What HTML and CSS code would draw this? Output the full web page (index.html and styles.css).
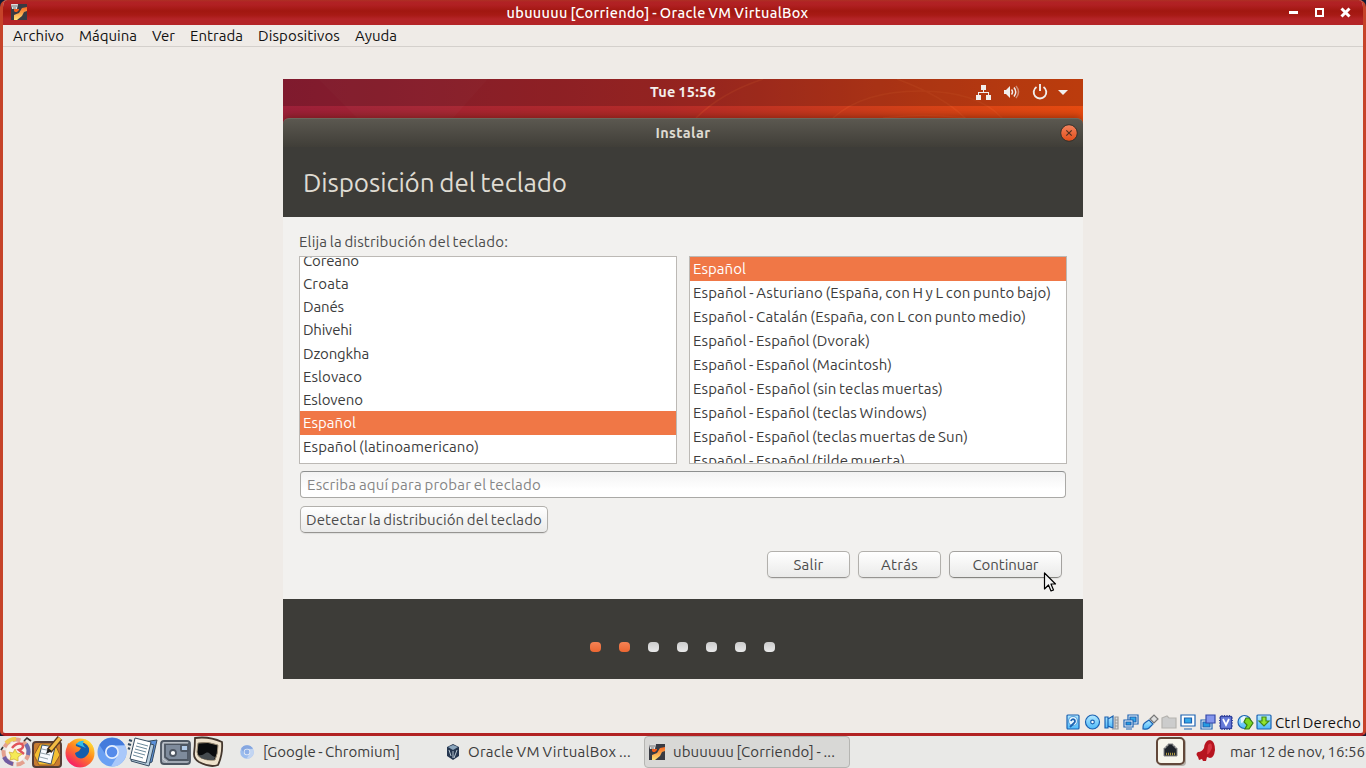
FILE: index.html
```html
<!DOCTYPE html>
<html lang="es">
<head>
<meta charset="utf-8">
<title>ubuuuuu [Corriendo] - Oracle VM VirtualBox</title>
<link rel="stylesheet" href="styles.css">
</head>
<body>
<svg class="defs" width="0" height="0" aria-hidden="true">
  <defs>
    <linearGradient id="blue" x2="0" y2="1"><stop stop-color="#b5e9ff"/><stop offset="1" stop-color="#4db9fa"/></linearGradient>
    <linearGradient id="orange" x2="0" y2="1"><stop stop-color="#f66820"/><stop offset="1" stop-color="#ffe477"/></linearGradient>
    <linearGradient id="fox" x1=".9" y1="0" x2=".2" y2="1"><stop stop-color="#fff13b"/><stop offset=".45" stop-color="#ff8a1c"/><stop offset="1" stop-color="#f5156c"/></linearGradient>
    <symbol id="vm" viewBox="0 0 16 16"><path fill="#393b43" d="M0 0h16v16H0z"/><path fill="url(#orange)" d="M11 4l5-1v4l-3 1-2 4-5 4H3v-5l5-2z"/><path fill="#f05a18" d="M3 5h5v1l-2 2H4L3 7z"/><path fill="#ddd" d="M0 0h7l-1 5H1z"/><path stroke="#777" d="M1 2h5M2 4h3"/></symbol>
    <symbol id="chromium" viewBox="0 0 30 30"><circle cx="15" cy="15" r="14.500" fill="#6aa0f3"/><path fill="#447bdc" d="M2.500 8A14.500 14.500 0 0 1 27.700 8H15a7 7 0 0 0-6 10z"/><path fill="#a9c8fa" d="M28 8.500A14.500 14.500 0 0 1 14 29.500L21 18a7 7 0 0 0-3-9z"/><circle cx="15" cy="15" r="7" fill="#e5eefc"/><circle cx="15" cy="15" r="5.300" fill="#558bea"/></symbol>
  </defs>
</svg>
<div class="desktop">
  <div class="window">
    <header class="titlebar">
      <svg class="title-icon" width="16" height="16"><use href="#vm"/></svg>
      <h1 class="win-title"><span data-w="302">ubuuuuu [Corriendo] - Oracle VM VirtualBox</span></h1>
      <svg class="win-buttons" width="64" height="12" viewBox="0 0 64 12"><path fill="#fff" d="M0 5h9v3H0z"/><path fill="none" stroke="#fff" stroke-width="2" d="M27 3h7v7h-7z"/><path stroke="#fff" stroke-width="3" d="M52.500 2.500l8 8m0-8l-8 8"/></svg>
    </header>
    <nav class="menubar">
      <span data-w="51">Archivo</span><span data-w="58">Máquina</span><span data-w="23">Ver</span><span data-w="53">Entrada</span><span data-w="82">Dispositivos</span><span data-w="42">Ayuda</span>
    </nav>
    <main class="workspace">
      <section class="guest">
        <div class="panel">
          <svg class="wallpaper" width="800" height="39" viewBox="0 0 800 39"><g fill="none" stroke="#f36a30" stroke-opacity=".22" stroke-width="1.500"><path d="M413 39Q438 14 480 0M550 39Q580 12 637 12T719 39M614 0Q660 17 682 39"/><path d="M600 39Q640 34 683 39"/></g><path fill="#fff" fill-opacity=".02" d="M35 0h170l-35 39H74z"/></svg>
          <div class="topbar">
            <span class="clock" data-w="66">Tue 15:56</span>
            <svg class="indicators" width="94" height="18" viewBox="0 0 94 18" fill="#f1efed"><path d="M5 2h5v5H8v2h5v3h2v5h-5v-5h2v-2H3v2h2v5H0v-5h2V9h5V7H5z"/><path d="M28 7h2l4-4v12l-4-4h-2z"/><path fill="none" stroke="#f1efed" stroke-width="1.500" d="M35.500 6.500q2 2.500 0 5M38 4.500q3.500 4.500 0 9"/><path fill="none" stroke="#f1efed" stroke-opacity=".45" stroke-width="1.500" d="M40 3q5 6 0 12"/><path fill="none" stroke="#f1efed" stroke-width="1.900" d="M60.500 4a6.300 6.300 0 1 0 7 0M64 1v7"/><path d="M82 7h10l-5 5z"/></svg>
          </div>
        </div>
        <div class="installer">
          <div class="inst-title"><span data-w="55">Instalar</span>
            <svg class="close" width="18" height="18" viewBox="0 0 18 18"><defs><linearGradient id="cl" x2="0" y2="1"><stop stop-color="#f4845f"/><stop offset="1" stop-color="#e24c18"/></linearGradient></defs><circle cx="9" cy="9" r="8.300" fill="url(#cl)" stroke="#343029"/><path stroke="#53301f" stroke-width="1.200" d="M6.300 6.300l5.400 5.400m0-5.400l-5.400 5.400"/></svg>
          </div>
          <h2 class="heading"><span data-w="264">Disposición del teclado</span></h2>
          <div class="content">
            <p class="label"><span data-w="209">Elija la distribución del teclado:</span></p>
            <div class="lists">
              <ul class="list layouts"><li><span data-w="56">Coreano</span></li><li><span data-w="46">Croata</span></li><li><span data-w="41">Danés</span></li><li><span data-w="49">Dhivehi</span></li><li><span data-w="66">Dzongkha</span></li><li><span data-w="59">Eslovaco</span></li><li><span data-w="60">Esloveno</span></li><li class="selected"><span data-w="53">Español</span></li><li><span data-w="176">Español (latinoamericano)</span></li></ul>
              <ul class="list variants"><li class="selected"><span data-w="53">Español</span></li><li><span data-w="358">Español - Asturiano (España, con H y L con punto bajo)</span></li><li><span data-w="333">Español - Catalán (España, con L con punto medio)</span></li><li><span data-w="177">Español - Español (Dvorak)</span></li><li><span data-w="199">Español - Español (Macintosh)</span></li><li><span data-w="250">Español - Español (sin teclas muertas)</span></li><li><span data-w="234">Español - Español (teclas Windows)</span></li><li><span data-w="275">Español - Español (teclas muertas de Sun)</span></li><li><span data-w="212">Español - Español (tilde muerta)</span></li></ul>
            </div>
            <div class="entry"><span data-w="234">Escriba aquí para probar el teclado</span></div>
            <button class="btn detect"><span data-w="236">Detectar la distribución del teclado</span></button>
            <div class="actions"><button class="btn"><span data-w="30">Salir</span></button><button class="btn"><span data-w="37">Atrás</span></button><button class="btn next"><span data-w="66">Continuar</span></button></div>
          </div>
          <footer class="steps"><i class="done"></i><i class="done"></i><i></i><i></i><i></i><i></i><i></i></footer>
        </div>
        <svg class="cursor" width="14" height="21" viewBox="0 0 14 21"><path fill="#f5f5f5" stroke="#000" stroke-width="1.200" stroke-linejoin="round" d="M1.500 1v16l4-4 2.500 6 2.500-1-2.500-6h4.500z"/></svg>
      </section>
    </main>
    <div class="statusbar">
      <svg width="206" height="17" viewBox="0 0 206 17" stroke-width="1.200">
        <g stroke="#1c62b1" fill="url(#blue)">
          <rect x="1" y="1" width="12" height="14" rx="1"/><circle cx="7" cy="7" r="4.500" fill="#eaf7ff" stroke="#5aa3dc"/><path fill="none" stroke-width="1.800" d="M5 7a2 2 0 1 1 3 2l-4 4"/>
          <circle cx="26.500" cy="8" r="7"/><circle cx="26.500" cy="8" r="1.800" fill="#fff"/>
          <path d="M39 3h3v11h-3zM42 5l5-3v12l-5-2z"/><path stroke="#999" fill="#ddd" d="M49 3h3v12h-3zM46 15h6M49 6h3M49 9h3M49 12h3"/>
          <path fill="#fff" d="M62 1h10v9H62z"/><path fill="#35a8e9" d="M64 3h6v5h-6z"/><path fill="#fff" d="M58 6h9v7h-9zM60 15h6"/><path fill="#249be2" d="M60 8h5v3h-5z"/>
          <path d="M77 15c0-4 0-5 3-7l3-2 4 4-4 4c-2 2-4 1-6 1z"/><path fill="#ddd" stroke="#777" d="M84 5l4-4 4 4-4 4z"/>
          <path fill="#ccc" stroke="#b5b3af" d="M96 4l5-2 2 2h7v10H96z"/>
          <path fill="#fff" d="M115 1h14v11h-14zM118 15h8"/><path fill="#35a8e9" d="M118.500 4h7v5h-7z"/>
          <path fill="#fff" d="M135 6h11v9h-11z"/><path fill="#249be2" d="M137 8h7v5h-7z"/><path fill="#8495ec" stroke="#3448a8" d="M140 1h9v8h-9z"/>
          <g stroke="#33439e"><path d="M156 1v15M158.500 1v15M161 1v15M163.500 1v15M153 4h14M153 6.500h14M153 9h14M153 12h14"/><rect x="154.500" y="2.500" width="11" height="12" fill="#667bd9"/><path fill="none" stroke="#fff" stroke-width="1.700" d="M157 5l3 6 3-6"/></g>
          <circle cx="178.500" cy="8" r="6.500"/><path fill="#eaf7ff" stroke="none" d="M175 4l3-2 3 2-3 4-3 1z"/><path fill="#7bd824" stroke="#397c12" d="M180 4h3l4 5-4 6h-4l2-4-3-3z"/>
          <rect x="191" y="1" width="14" height="14" rx="1"/><path fill="#94e52f" stroke="#42881a" d="M196 3h4v4h3l-5 5-5-5h3z"/>
        </g>
      </svg>
      <span class="host-key" data-w="86">Ctrl Derecho</span>
    </div>
  </div>
  <footer class="taskbar">
    <div class="launchers">
      <svg width="224" height="32" viewBox="0 0 224 32">
        <g fill="none" stroke-width="4"><circle cx="16" cy="16" r="12.500" stroke="#e4a18f" stroke-dasharray="8 3"/><path stroke="#705da2" d="M4 21a13 13 0 0 0 9 7"/><path stroke="#efcb51" d="M6 7a13 13 0 0 1 10-4"/><path stroke="#6f70b2" d="M26 8a13 13 0 0 1 2 11"/></g><circle cx="16" cy="16" r="10" fill="#fbf4eb"/><path fill="none" stroke="#e0555a" stroke-width="2.500" d="M12 12q5-6 10-4 3 4-3 6l5 4"/><path fill="#f5ea55" stroke="#d3b03a" stroke-width=".8" d="M15 13l2 4 5 1-4 3v4l-4-2-4 1 1-4-2-4 4 1z"/><path fill="none" stroke="#333" stroke-width="1.600" d="M24 5l3-3 4 3M1 14l2-3"/>
        <g><rect x="33" y="6" width="28" height="25" rx="3" fill="#c87c30" stroke="#553d35" stroke-width="2"/><path fill="#f5bf32" stroke="#965b25" d="M40 8h15l5 11-6 10H39l-5-10z"/><path fill="#f7faff" stroke="#3b5369" d="M42 9l13 2-4 17-13-3z"/><path stroke="#91a0aa" d="M42 13l9 2m-10 2l9 2m-10 2l8 2"/><path stroke="#59381f" stroke-width="6" d="M49 15L60 2"/><path stroke="#f2bb43" stroke-width="3.500" d="M50 14L60 2"/><path fill="#222" d="M46 18l2-6 4 3z"/></g>
        <g><circle cx="80" cy="17" r="14.500" fill="url(#fox)"/><circle cx="81" cy="15" r="8.500" fill="#145dac"/><path fill="#30bde8" d="M76 8q4-4 8-3-3 3 2 7z"/><path fill="url(#fox)" d="M66 17l2-10 4 3 3-5 1 5 5 2-2 3-4 2c1 6 8 8 13 1 3-5 0-10-4-15 8 2 12 10 9 18-4 12-20 12-25 3z"/></g>
        <use href="#chromium" x="97" y="1" width="30" height="30"/>
        <g stroke="#344b61"><path fill="#5b91da" d="M143 6l14-2-5 22-5 2z"/><path fill="#b7cddc" d="M138 4l16 5-5 21-18-5z"/><path fill="#fff" d="M135 2l16 4-5 21-16-4z"/><path stroke="#6a899b" d="M137 7l11 3m-12 0l11 3m-12 0l11 3m-12 0l11 3m-12 0l10 3"/><path d="M132 5l-3-1m2 5l-3-1m2 5l-2-1" stroke-width="2"/></g>
        <g stroke="#4d5662" stroke-width="1.800"><rect x="161" y="5" width="29" height="23" rx="3" fill="#a1a9b4"/><path fill="#7e8b9c" d="M165 8h23v16h-19l-4-3z"/><rect x="181" y="9" width="7" height="6" rx="1" fill="#b2cbe8"/><circle cx="173" cy="17" r="3" fill="#fff"/><path fill="none" stroke="#ced2d7" stroke-width="1" d="M163 7h25M163 8v15l4 3"/></g>
        <g><path fill="#eee2cc" stroke="#44372e" stroke-width="1.800" d="M195 2q14-2 27 4 1 12-4 23-8 3-19-3-5-3-5-8 1-8 1-16z"/><path fill="#0a0c0d" stroke="#9e8f77" d="M198 7q10-2 20 2 0 9-3 15-8 1-14-2-4-2-4-6z"/><path fill="#454b4e" d="M199 19c6 1 6-4 10-2q3 3 6 4l-1 3q-8 0-13-2z"/></g>
      </svg>
    </div>
    <div class="tasks">
      <div class="task"><svg class="faded" width="14" height="14"><use href="#chromium"/></svg><span data-w="137">[Google - Chromium]</span></div>
      <div class="task"><svg width="14" height="16" viewBox="0 0 14 16"><path fill="#263750" d="M1 3l6-3 6 3v9l-6 4-6-4z"/><path fill="#8ba6bd" d="M2 3l5-2 5 2-5 3z"/><path stroke="#b7c6d1" d="M3 6l2 6m6-6l-3 8M7 7v7"/></svg><span data-w="163">Oracle VM VirtualBox ...</span></div>
      <div class="task active"><svg width="16" height="16"><use href="#vm"/></svg><span data-w="162">ubuuuuu [Corriendo] - ...</span></div>
    </div>
    <div class="tray">
      <svg width="60" height="32" viewBox="0 0 60 32"><rect x="2" y="3" width="28" height="27" rx="4" fill="#b5b0a9"/><rect x="1" y="2" width="27" height="26" rx="4" fill="#f8f6ec" stroke="#62483a" stroke-width="2"/><path fill="#20252a" stroke="#888" d="M8 12h2v-2h2V8h5v2h2v2h2v8H8z"/><path stroke="#b29b45" stroke-width="2.500" stroke-dasharray="1 1" d="M10 18h9"/><path fill="#b71520" d="M42 16q4 0 6-4 1-8 6-8 5 1 5 10-1 8-5 8l-3-1-1 4h-3l-1-2-3 1-1-3q-3-3 0-5z"/><path fill="#d73440" d="M52 9q4-4 4 3-3 7-5 6z"/></svg>
      <span data-w="135">mar 12 de nov, 16:56</span>
    </div>
  </footer>
</div>
<script src="fit.js"></script>
</body>
</html>
```
FILE: styles.css
```css
* { box-sizing: border-box; }
body { margin: 0; width: 1366px; height: 768px; overflow: hidden; font: 15px/20px Ubuntu, "Noto Sans", sans-serif; color: #3c3c3c; }
h1, h2, p, ul { margin: 0; padding: 0; font-weight: normal; }
svg { display: block; flex: none; }
span { white-space: pre; word-spacing: -1px; }
.defs { position: absolute; }
.desktop { display: flex; flex-direction: column; height: 768px; background: #101b36; }
.window { height: 736px; display: flex; flex-direction: column; background: #efebe7; border: solid #c64329; border-width: 0 3px 3px; border-bottom-color: #b22223; border-radius: 7px 7px 5px 5px; overflow: hidden; }
.titlebar { height: 25px; flex: none; margin: 0 -3px; padding: 0 15px 0 11px; display: flex; align-items: center; color: #fff; background: linear-gradient(#ae3023 0, #b12225 2px, #b02022 5px, #a11710 11px, #a71a15 15px, #b42427 19px, #b42427); }
.title-icon { margin-top: -1px; }
.win-title { flex: 1; text-align: center; font-size: 14.5px; font-weight: 500; line-height: 25px; padding-right: 1px; }
.win-buttons { margin-right: -2px; margin-top: -1px; }
.menubar { height: 22px; flex: none; display: flex; gap: 15px; padding: 1px 10px 0; color: #111; border-bottom: 1px solid #d4d0cc; }
.workspace { flex: 1; padding: 32px 280px 0; }
.guest { position: relative; width: 800px; height: 600px; display: flex; flex-direction: column; }
.panel { height: 49px; flex: none; position: relative; background: linear-gradient(90deg, #9c2039, #b42b28 48%, #d34117 80%, #e54a10); }
.wallpaper { position: absolute; inset: 0 auto auto 0; }
.topbar { position: relative; height: 27px; display: flex; justify-content: center; align-items: center; background: rgba(0,0,0,.18); color: #f4efec; font-size: 14.5px; font-weight: 700; padding-bottom: 1px; }
.indicators { position: absolute; right: 13px; top: 4px; }
.installer { margin-top: -10px; position: relative; height: 561px; display: flex; flex-direction: column; box-shadow: 0 -2px 7px rgba(70,20,0,.45); border-radius: 6px 6px 0 0; clip-path: inset(-12px 0 0); }
.inst-title { height: 29px; flex: none; background: linear-gradient(#5b5850, #403e38); border-top: 1px solid #6b685d; border-radius: 6px 6px 0 0; color: #dfdbd2; font-size: 14.5px; font-weight: 700; line-height: 28px; text-align: center; position: relative; }
.close { position: absolute; right: 5px; top: 5px; }
.heading { height: 70px; flex: none; background: #3d3c38; color: #dfdbd2; padding: 1px 20px 0; font-size: 26px; line-height: 70px; }
.content { height: 382px; flex: none; background: #f2f1ef; padding: 15px 16px 0; display: flex; flex-direction: column; align-items: flex-start; }
.label { height: 24px; color: #4c4c4c; }
.lists { display: flex; gap: 12px; width: 768px; }
.list { width: 378px; height: 208px; overflow: hidden; list-style: none; border: 1px solid #bcb9b5; background: #fff; }
.list li { height: 24px; padding: 0 3px; line-height: 24px; }
.layouts li { height: 23.2px; }
.layouts li:first-child { margin-top: -8.100px; }
.list li.selected { height: 24px; background: #f07746; color: #fff; }
.entry { margin: 7px 1px 0; width: 766px; height: 27px; border: 1px solid #aaa9a6; border-top-color: #8d8f8f; border-radius: 4px; background: linear-gradient(#f3f3f3, #fff 70%); padding: 0 6px; line-height: 26px; color: #858585; }
.btn { height: 27px; width: 83px; padding: 0; font: inherit; line-height: 24px; color: #4c4c4c; text-align: center; border: 1px solid #b2b0ac; border-bottom-color: #969491; border-radius: 5px; background: linear-gradient(#fff, #eaeae9); box-shadow: 0 1px 1px rgba(0,0,0,.08); }
.detect { width: 248px; margin: 8px 1px 0; }
.actions { align-self: flex-end; display: flex; gap: 8px; margin: 18px 5px 0 0; }
.btn.next { width: 113px; border-color: #a4a29f; border-bottom-color: #858480; }
.steps { height: 80px; background: #3d3c38; display: flex; gap: 18px; justify-content: center; padding: 43px 1px 0 0; }
.steps i { width: 11px; height: 10px; border-radius: 4px; background: linear-gradient(#ccc, #e9e9e9); }
.steps .done { background: linear-gradient(#f58254, #ec6631); }
.cursor { position: absolute; left: 760px; top: 493px; }
.statusbar { height: 22px; flex: none; display: flex; align-items: center; gap: 3px; justify-content: flex-end; padding-right: 2px; color: #111; }
.host-key { padding-top: 2px; }
.taskbar { height: 32px; background: #e9e9e7; display: flex; align-items: center; }
.launchers { width: 239px; }
.tasks { display: flex; }
.task { height: 32px; width: 205px; display: flex; align-items: center; gap: 8px; padding: 0 1px; }
.task:nth-child(2) { width: 200px; padding-left: 2px; }
.task.active { width: 206px; padding: 0 4px; border: 1px solid #b5b5b2; border-radius: 4px; background: #d8d8d6; gap: 8px; }
.faded { opacity: .6; margin-right: 1px; }
.tray { flex: 1; display: flex; align-items: center; justify-content: flex-end; gap: 14px; padding-right: 1px; }
```
FILE: fit.js
```js
document.querySelectorAll('[data-w]').forEach(el => {
  const natural = el.getBoundingClientRect().width;
  const spacing = (Number(el.dataset.w) - natural) / el.textContent.length;
  el.style.letterSpacing = spacing + 'px';
});
```
